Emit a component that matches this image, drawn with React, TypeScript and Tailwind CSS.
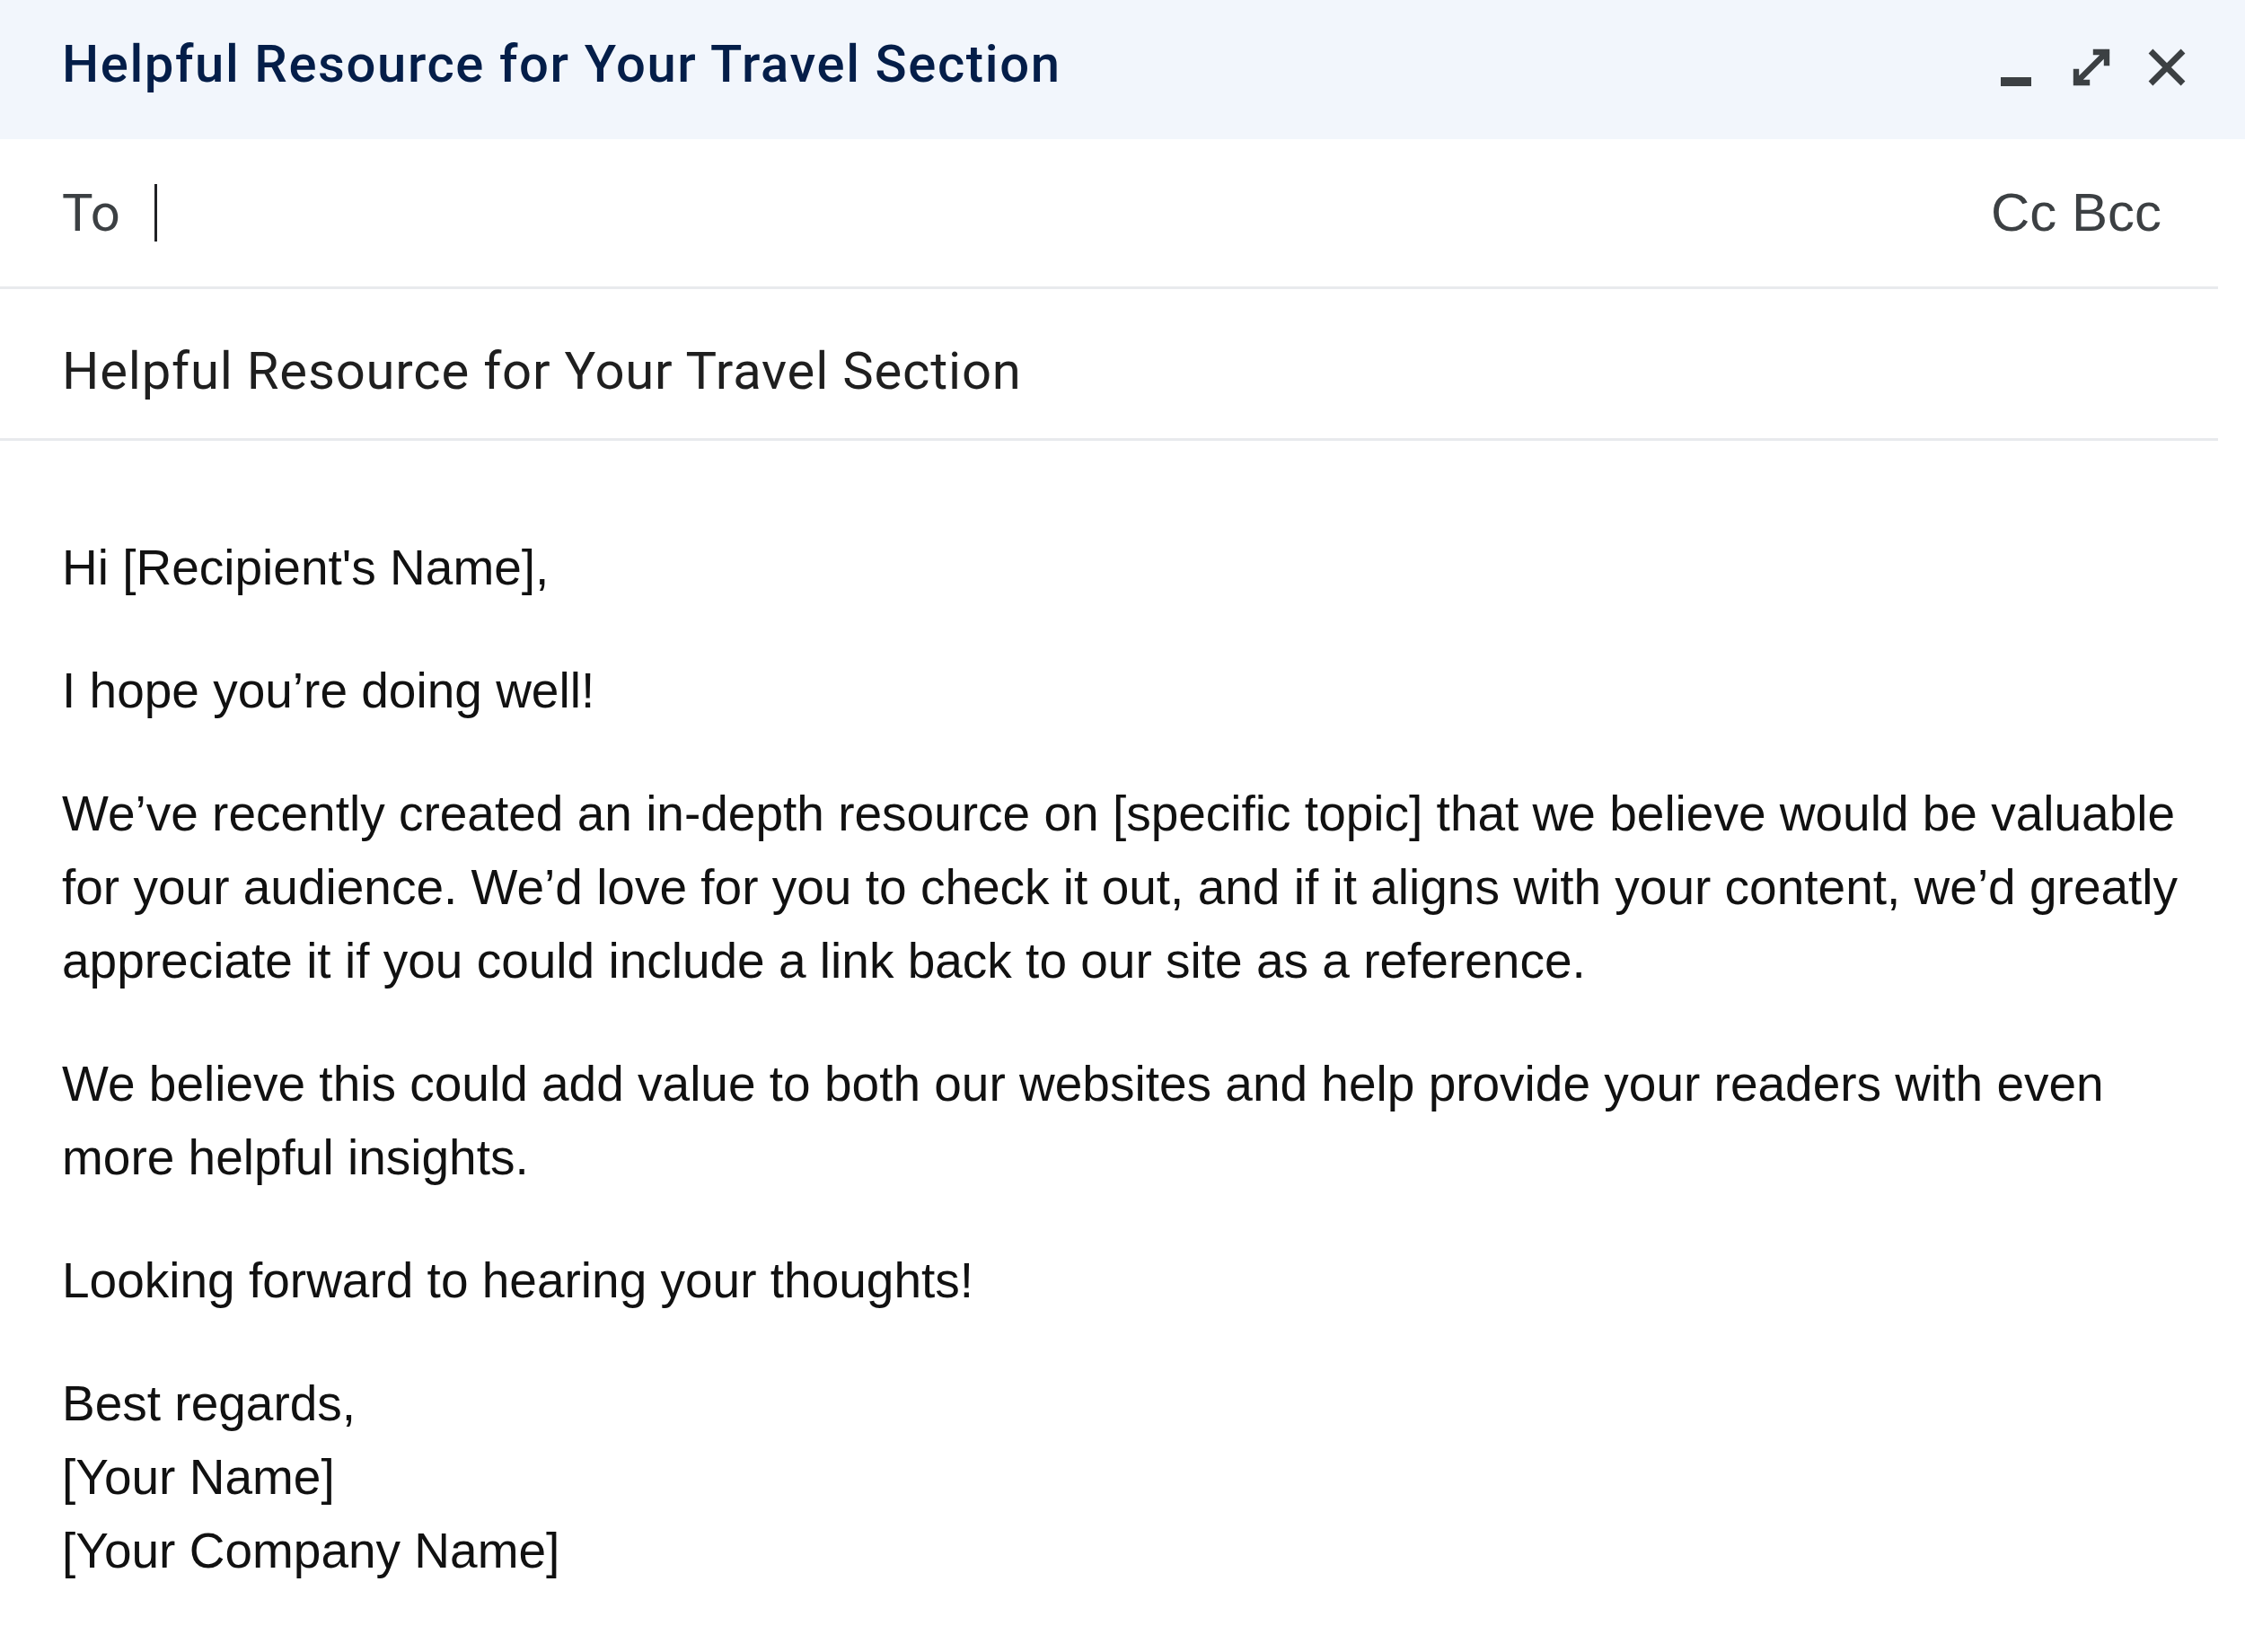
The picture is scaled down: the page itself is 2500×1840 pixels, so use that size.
import React from "react";

const MinimizeIcon = () => (
  <svg width="48" height="48" viewBox="0 0 24 24" fill="#3c4043">
    <rect x="3.5" y="17.5" width="17" height="5" />
  </svg>
);

const ExpandIcon = () => (
  <svg width="48" height="48" viewBox="0 0 24 24" fill="none" stroke="#3c4043" strokeWidth="3.2" strokeLinecap="square">
    <path d="M14.5 3.5h6v6M9.5 20.5h-6v-6M20 4L4 20" />
  </svg>
);

const CloseIcon = () => (
  <svg width="48" height="48" viewBox="0 0 24 24" fill="none" stroke="#3c4043" strokeWidth="3.4">
    <path d="M3 3L21 21M21 3L3 21" />
  </svg>
);

export default function App() {
  return (
    <div className="w-[2500px] h-[1840px] bg-white overflow-hidden">
      <div className="h-[155px] bg-[#f2f6fc] flex items-center justify-between pl-[69px] pr-[63px]">
        <h1 className="text-[58px] font-medium tracking-[1.6px] text-[#041e49] font-['Roboto',sans-serif] leading-none -mt-[14px]">
          Helpful Resource for Your Travel Section
        </h1>
        <div className="flex items-center gap-[36px] -mt-[6px]">
          <MinimizeIcon />
          <ExpandIcon />
          <CloseIcon />
        </div>
      </div>

      <div className="mr-[30px]">
        <div className="h-[167px] flex items-center justify-between pl-[69px] pr-[63px] border-b-[3px] border-[#e8eaed]">
          <div className="flex items-center gap-[38px]">
            <span className="text-[58px] text-[#3c4043] font-['Roboto',sans-serif]">To</span>
            <span className="w-[3px] h-[64px] bg-[#202124]" />
          </div>
          <span className="text-[60px] text-[#3c4043] font-['Liberation_Sans',Arial,sans-serif]">Cc Bcc</span>
        </div>

        <div className="h-[169px] flex items-center pl-[69px] pt-[16px] border-b-[3px] border-[#e8eaed]">
          <span className="text-[58px] tracking-[0.8px] text-[#1f1f1f] font-['Roboto',sans-serif]">
            Helpful Resource for Your Travel Section
          </span>
        </div>
      </div>

      <div className="pt-[100px] pl-[69px] pr-[60px] text-[55px] leading-[82px] text-[#111] font-['Liberation_Sans',Arial,sans-serif] flex flex-col gap-[55px]">
        <p>Hi [Recipient's Name],</p>
        <p>I hope you’re doing well!</p>
        <p>
          We’ve recently created an in-depth resource on [specific topic] that we believe would be valuable for your
          audience. We’d love for you to check it out, and if it aligns with your content, we’d greatly appreciate it if
          you could include a link back to our site as a reference.
        </p>
        <p>
          We believe this could add value to both our websites and help provide your readers with even more helpful
          insights.
        </p>
        <p>Looking forward to hearing your thoughts!</p>
        <p>
          Best regards,
          <br />
          [Your Name]
          <br />
          [Your Company Name]
        </p>
      </div>
    </div>
  );
}
